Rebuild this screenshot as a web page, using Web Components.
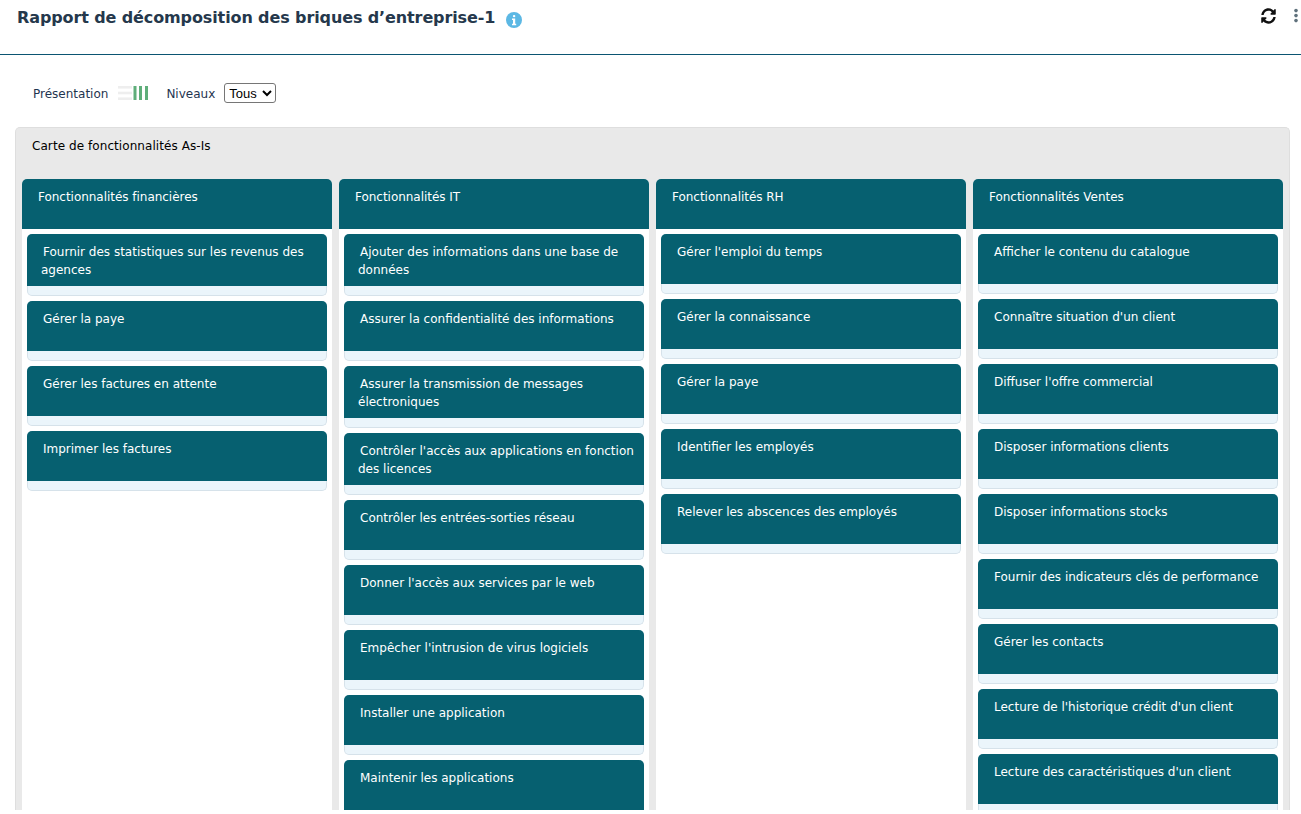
<!DOCTYPE html>
<html lang="fr"><head><meta charset="utf-8"><title>Rapport</title>
<style>
html,body{margin:0;padding:0;background:#fff;height:814px;overflow:hidden}
body{font-family:"DejaVu Sans",sans-serif}
</style></head><body>
<report-page>
<report-header slot="header" title-text="Rapport de décomposition des briques d’entreprise-1"></report-header>
<report-toolbar slot="toolbar"></report-toolbar>
<cap-panel slot="panel" heading="Carte de fonctionnalités As-Is">
<cap-column heading="Fonctionnalités financières">
<cap-item>Fournir des statistiques sur les revenus des agences</cap-item>
<cap-item>Gérer la paye</cap-item>
<cap-item>Gérer les factures en attente</cap-item>
<cap-item>Imprimer les factures</cap-item>
</cap-column>
<cap-column heading="Fonctionnalités IT">
<cap-item>Ajouter des informations dans une base de données</cap-item>
<cap-item>Assurer la confidentialité des informations</cap-item>
<cap-item>Assurer la transmission de messages électroniques</cap-item>
<cap-item>Contrôler l'accès aux applications en fonction des licences</cap-item>
<cap-item>Contrôler les entrées-sorties réseau</cap-item>
<cap-item>Donner l'accès aux services par le web</cap-item>
<cap-item>Empêcher l'intrusion de virus logiciels</cap-item>
<cap-item>Installer une application</cap-item>
<cap-item>Maintenir les applications</cap-item>
</cap-column>
<cap-column heading="Fonctionnalités RH">
<cap-item>Gérer l'emploi du temps</cap-item>
<cap-item>Gérer la connaissance</cap-item>
<cap-item>Gérer la paye</cap-item>
<cap-item>Identifier les employés</cap-item>
<cap-item>Relever les abscences des employés</cap-item>
</cap-column>
<cap-column heading="Fonctionnalités Ventes">
<cap-item>Afficher le contenu du catalogue</cap-item>
<cap-item>Connaître situation d'un client</cap-item>
<cap-item>Diffuser l'offre commercial</cap-item>
<cap-item>Disposer informations clients</cap-item>
<cap-item>Disposer informations stocks</cap-item>
<cap-item>Fournir des indicateurs clés de performance</cap-item>
<cap-item>Gérer les contacts</cap-item>
<cap-item>Lecture de l'historique crédit d'un client</cap-item>
<cap-item>Lecture des caractéristiques d'un client</cap-item>
</cap-column>
</cap-panel>
</report-page>
<script>
function def(name,css,html,init){
  customElements.define(name,class extends HTMLElement{
    connectedCallback(){
      if(this.shadowRoot)return;
      const r=this.attachShadow({mode:'open'});
      r.innerHTML='<style>'+css+'</style>'+(typeof html==='function'?html(this):html);
    }
  });
}
def('report-page',':host{display:flex;flex-direction:column;height:810px;overflow:hidden}',
 '<slot name="header"></slot><slot name="toolbar"></slot><slot name="panel"></slot>');
def('report-header',
 `:host{display:flex;justify-content:space-between;height:54px;border-bottom:1px solid #0b5572;box-sizing:content-box;flex:none}
  h1{margin:0;padding:7px 0 0 17px;font:bold 16px/20px "DejaVu Sans",sans-serif;color:#25384c;display:flex;align-items:flex-start;letter-spacing:-.115px}
  h1 span{padding-top:1px}
  .info{margin:5px 0 0 11px;flex:none}
  .acts{display:flex;align-items:flex-start;padding:8px 2px 0 0;gap:17px}`,
 el=>`<h1><span>${el.getAttribute('title-text')}</span><svg class="info" width="16" height="16" viewBox="0 0 16 16"><circle cx="8" cy="8" r="8" fill="#5cb8e4"/><rect x="6.9" y="2.900" width="2.400" height="2.400" rx="1.100" fill="#fff"/><path d="M6 6.600h3.200v5.200h1v1.400H6v-1.400h1V8H6z" fill="#fff"/></svg></h1>
 <div class="acts"><svg width="15" height="16" viewBox="0 0 512 512" preserveAspectRatio="none"><path fill="#111" d="M370.700 133.300C339.500 104 298.900 88 255.800 88c-77.500.1-144.300 53.200-162.800 126.900-1.300 5.400-6.100 9.200-11.700 9.200H24.100c-7.500 0-13.200-6.800-11.800-14.200C33.900 94.900 134.800 8 256 8c66.400 0 126.800 26.100 171.300 68.700L463 41C478.100 25.900 504 36.600 504 57.900V192c0 13.300-10.700 24-24 24H345.900c-21.400 0-32.100-25.900-17-41l41.800-41.700zM32 296h134.100c21.400 0 32.100 25.900 17 41l-41.800 41.800c31.300 29.300 71.800 45.300 114.900 45.200 77.400-.1 144.300-53.100 162.800-126.800 1.300-5.400 6.100-9.200 11.700-9.200h57.300c7.500 0 13.200 6.800 11.800 14.200C478.100 417.100 377.200 504 256 504c-66.400 0-126.800-26.100-171.300-68.700L49 471C33.900 486.100 8 475.400 8 454.100V320c0-13.300 10.700-24 24-24z"/></svg>
 <svg width="6" height="16" viewBox="0 0 6 16"><g fill="#5f717c"><circle cx="3" cy="2.600" r="1.800"/><circle cx="3" cy="7.600" r="1.800"/><circle cx="3" cy="12.600" r="1.800"/></g></svg></div>`);
def('report-toolbar',
 `:host{display:flex;align-items:center;height:72px;padding:4px 0 0 33px;box-sizing:border-box;flex:none;font:12px "DejaVu Sans",sans-serif;color:#1f3550}
  span{padding-top:2px}
  svg{margin:0 18px 0 10px}
  select{width:52px;height:20px;margin-left:9px;font:13px "Liberation Sans",sans-serif;color:#000;background:#fff;border:1px solid #767676;border-radius:3px;padding:0}`,
 `<span>Présentation</span><svg width="30" height="16" viewBox="0 0 30 16"><g fill="#eeeeee"><rect x="0" y="1" width="14" height="2.600"/><rect x="0" y="6.700" width="14" height="2.600"/><rect x="0" y="12.400" width="14" height="2.600"/></g><g fill="#5fae7a"><rect x="15.500" y="1" width="3" height="14"/><rect x="21" y="1" width="3" height="14"/><rect x="27" y="1" width="3" height="14"/></g></svg><span>Niveaux</span><select aria-label="Niveaux"><option>Tous</option></select>`);
def('cap-panel',
 `:host{display:block;margin:0 11px 0 15px;height:683px;background:#e9e9e9;border:1px solid #dedede;border-bottom:0;border-radius:5px 5px 0 0;box-sizing:border-box;overflow:hidden;font:12px "DejaVu Sans",sans-serif}
  h2{margin:0;padding:9px 0 0 16px;height:51px;box-sizing:border-box;font:12px/18px "DejaVu Sans",sans-serif;color:#000;letter-spacing:.07px}
  .cols{display:grid;grid-template-columns:repeat(4,310px);gap:7px;padding-left:6px}`,
 el=>`<h2>${el.getAttribute('heading')}</h2><div class="cols"><slot></slot></div>`);
def('cap-column',
 `:host{display:block;background:#fff;min-height:640px;border-radius:5px 5px 0 0}
  .h{height:50px;background:#066070;color:#fff;border-radius:5px 5px 0 0;padding:9px 16px 0;box-sizing:border-box;font:12px/18px "DejaVu Sans",sans-serif;letter-spacing:-.03px}
  .b{padding:5px;display:flex;flex-direction:column;gap:5px}`,
 el=>`<div class="h">${el.getAttribute('heading')}</div><div class="b"><slot></slot></div>`);
def('cap-item',
 `:host{display:block;background:#ebf5fb;border:1px solid #d6e2ea;border-top:0;border-radius:5px;box-sizing:border-box;margin:0}
  .t{background:#066070;color:#fff;min-height:50px;margin:0 -1px;padding:9px 5px 7px 14px;box-sizing:border-box;border-radius:5px 5px 0 0;font:12px/18px "DejaVu Sans",sans-serif;text-indent:2px}
  .f{height:9px}`,
 `<div class="t"><slot></slot></div><div class="f"></div>`);
</script>
</body></html>
